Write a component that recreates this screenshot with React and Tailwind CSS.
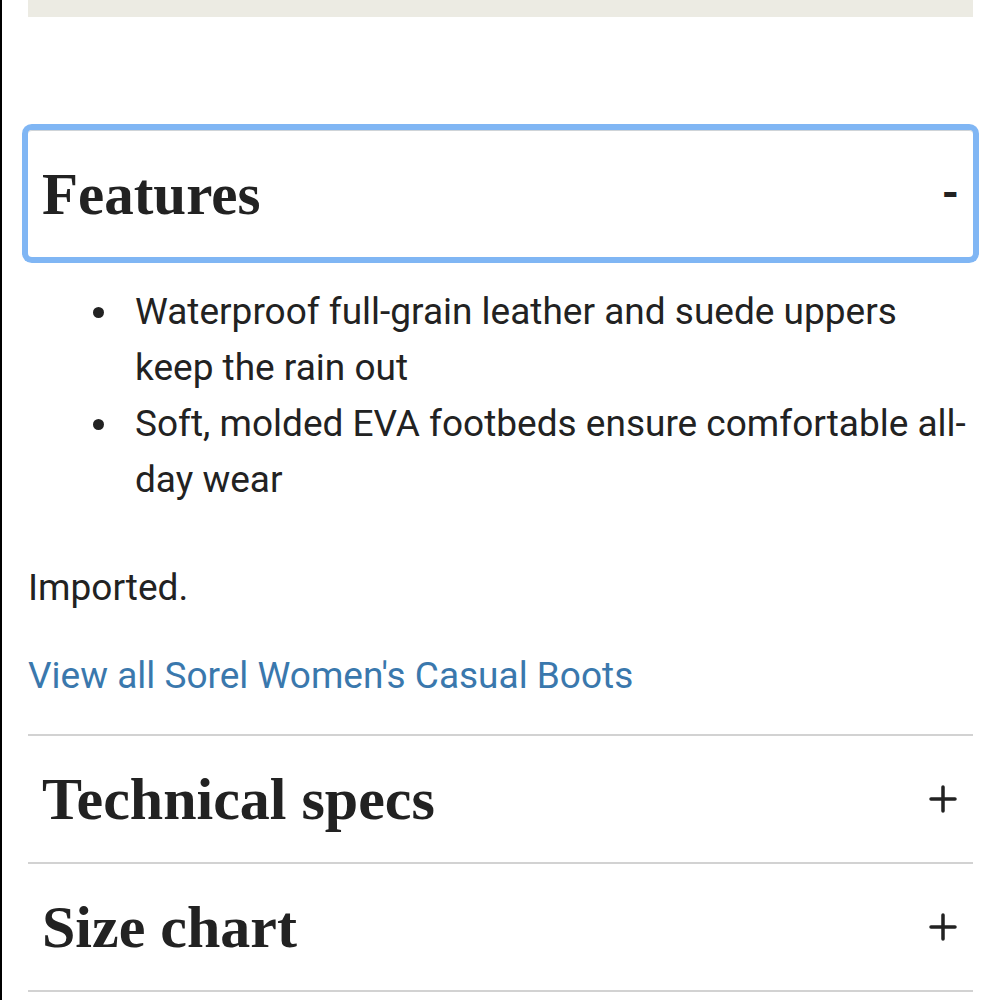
import React from 'react';

const sans = "font-['Roboto','Liberation_Sans',sans-serif]";
const serif = "font-['Liberation_Serif','DejaVu_Serif',serif]";

const features = [
    'Waterproof full-grain leather and suede uppers keep the rain out',
    'Soft, molded EVA footbeds ensure comfortable all-day wear',
];

const PlusIcon = () => (
    <svg width="28" height="28" viewBox="0 0 28 28" fill="none" stroke="#222" strokeWidth="3.5" strokeLinecap="round" aria-hidden="true">
        <path d="M14 2v24M2 14h24" />
    </svg>
);

const AccordionRow = ({ title }) => (
    <button className="w-full h-[128px] border-t-2 border-[#d2d2d2] flex items-center justify-between pl-[14px] pr-[16px] text-left">
        <span className={`${serif} font-bold text-[60px] leading-none text-[#222]`}>{title}</span>
        <PlusIcon />
    </button>
);

const App = () => {
    return (
        <div className="min-h-screen bg-white border-l-2 border-black">
            <div className="pl-[26px] pr-[27px]">
                <div className="h-[17px] bg-[#ecebe3]" />

                <button className="mt-[113px] w-full h-[127px] border-t border-[#cfd4d8] rounded-[4px] ring-[6px] ring-[#80b6f4] flex items-center justify-between pl-[14px] pr-[14px] text-left">
                    <span className={`${serif} font-bold text-[59px] leading-none text-[#222]`}>Features</span>
                    <span className={`${sans} font-bold text-[44px] leading-none text-[#222] -mt-[2px]`}>-</span>
                </button>

                <ul className={`mt-[27px] ${sans} text-[37px] leading-[56px] text-[#222]`}>
                    {features.map((item) => (
                        <li key={item} className="flex">
                            <span className="w-[107px] shrink-0 h-[56px] flex items-center">
                                <span className="ml-[65px] w-[11px] h-[11px] rounded-full bg-[#222]" />
                            </span>
                            <span>{item}</span>
                        </li>
                    ))}
                </ul>

                <p className={`mt-[52px] ${sans} text-[37px] leading-[56px] text-[#222]`}>Imported.</p>

                <a href="#" className={`mt-[32px] block ${sans} text-[37px] leading-[56px] text-[#3a78ad]`}>
                    View all Sorel Women's Casual Boots
                </a>

                <div className="mt-[30px] border-b-2 border-[#d2d2d2]">
                    <AccordionRow title="Technical specs" />
                    <AccordionRow title="Size chart" />
                </div>
            </div>
        </div>
    );
};

export default App;
